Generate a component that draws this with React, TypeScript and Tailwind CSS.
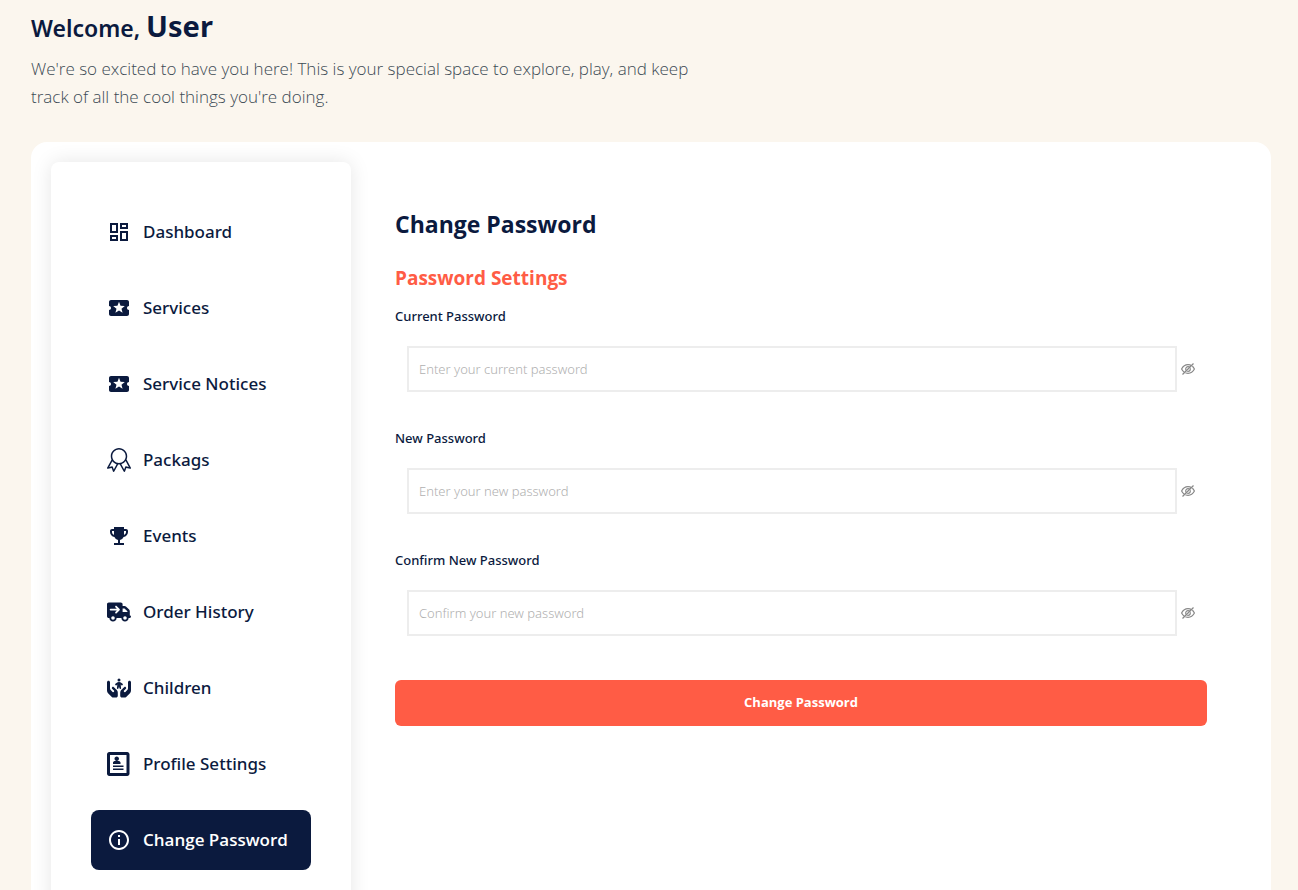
import { useState } from 'react';
import type { IconType } from 'react-icons';
import {
  MdEmojiEvents,
  MdInfoOutline,
  MdLocalActivity,
  MdOutlineDashboard,
} from 'react-icons/md';
import { SlBadge } from 'react-icons/sl';
import { FaHandsHoldingChild, FaTruckArrowRight } from 'react-icons/fa6';
import { ImProfile } from 'react-icons/im';

interface NavItem {
  label: string;
  href: string;
  icon: IconType;
}

const NAV_ITEMS: NavItem[] = [
  { label: 'Dashboard', href: '#dashboard', icon: MdOutlineDashboard },
  { label: 'Services', href: '#services', icon: MdLocalActivity },
  { label: 'Service Notices', href: '#service-notices', icon: MdLocalActivity },
  { label: 'Packags', href: '#packages', icon: SlBadge },
  { label: 'Events', href: '#events', icon: MdEmojiEvents },
  { label: 'Order History', href: '#orders', icon: FaTruckArrowRight },
  { label: 'Children', href: '#children', icon: FaHandsHoldingChild },
  { label: 'Profile Settings', href: '#profile', icon: ImProfile },
  { label: 'Change Password', href: '#change-password', icon: MdInfoOutline },
];

const ACTIVE_ITEM = 'Change Password';

function Sidebar() {
  return (
    <nav className="w-[300px] shrink-0 rounded-lg bg-white p-10 shadow-[0_0_20px_rgba(0,0,0,0.1)]">
      <ul className="flex flex-col gap-4">
        {NAV_ITEMS.map(({ label, href, icon: Icon }) => (
          <li key={label}>
            <a
              href={href}
              className={`flex h-[60px] items-center gap-3 rounded-lg px-4 text-[17px] whitespace-nowrap ${
                label === ACTIVE_ITEM
                  ? 'bg-[#0b1a3e] font-semibold text-white'
                  : "font-['Noto_Sans',sans-serif] font-medium text-[#0b1a3e]"
              }`}
            >
              <Icon size={24} className="shrink-0" />
              {label}
            </a>
          </li>
        ))}
      </ul>
    </nav>
  );
}

function EyeSlashIcon() {
  return (
    <svg
      width="14"
      height="14"
      viewBox="0 0 14 14"
      fill="none"
      stroke="currentColor"
      strokeWidth="1.2"
    >
      <path d="M.6 7C2 4.300 4.300 2.700 7 2.700S12 4.300 13.400 7C12 9.700 9.700 11.300 7 11.300S2 9.700.6 7Z" />
      <circle cx="7" cy="7" r="2.300" />
      <path d="M2.300 12.900 13.200 2" stroke="white" strokeWidth="0.8" />
      <path d="M1.500 12.500 12.500 1.500" />
    </svg>
  );
}

interface PasswordFieldProps {
  id: string;
  label: string;
  placeholder: string;
}

function PasswordField({ id, label, placeholder }: PasswordFieldProps) {
  const [value, setValue] = useState('');
  const [visible, setVisible] = useState(false);

  return (
    <div className="mb-9">
      <label
        htmlFor={id}
        className="block font-['Noto_Sans',sans-serif] text-[13px] leading-5 font-medium"
      >
        {label}
      </label>
      <div className="mt-5 flex items-center gap-1 px-3">
        <input
          id={id}
          type={visible ? 'text' : 'password'}
          value={value}
          onChange={(e) => setValue(e.target.value)}
          placeholder={placeholder}
          className="h-[46px] min-w-0 flex-1 border-2 border-[#ededed] px-[10px] font-['Noto_Sans',sans-serif] text-[13px] font-light outline-none placeholder:text-[#b0b0b0]"
        />
        <button
          type="button"
          aria-label="Toggle password visibility"
          onClick={() => setVisible(!visible)}
          className="text-[#888888]"
        >
          <EyeSlashIcon />
        </button>
      </div>
    </div>
  );
}

function ChangePasswordForm() {
  return (
    <form className="flex-1 px-11 pt-11" onSubmit={(e) => e.preventDefault()}>
      <h2 className="text-[23px] leading-9 font-bold">Change Password</h2>
      <h3 className="mt-5 text-[19px] leading-8 font-bold text-[#ff5c45]">Password Settings</h3>
      <div className="mt-3">
        <PasswordField
          id="current-password"
          label="Current Password"
          placeholder="Enter your current password"
        />
        <PasswordField
          id="new-password"
          label="New Password"
          placeholder="Enter your new password"
        />
        <PasswordField
          id="confirm-password"
          label="Confirm New Password"
          placeholder="Confirm your new password"
        />
      </div>
      <button
        type="submit"
        className="mt-2 h-[46px] w-full rounded-md bg-[#ff5c45] text-[13px] font-bold text-white"
      >
        Change Password
      </button>
    </form>
  );
}

export default function App() {
  return (
    <div className="min-h-screen bg-[#fbf6ee] pr-[27px] pl-[31px] font-['Open_Sans','Noto_Sans',sans-serif] text-[#0b1a3e]">
      <header className="pt-2">
        <h1 className="font-['Noto_Sans',sans-serif] text-[23px] leading-10 font-semibold">
          Welcome, <span className="text-[29px] leading-none font-bold">User</span>
        </h1>
        <p className="mt-[7px] max-w-[660px] text-[17px] leading-7 font-light text-[#3b4a54]">
          We're so excited to have you here! This is your special space to explore, play, and keep
          track of all the cool things you're doing.
        </p>
      </header>

      <main className="mt-[31px] flex rounded-2xl bg-white p-5">
        <Sidebar />
        <ChangePasswordForm />
      </main>
    </div>
  );
}
